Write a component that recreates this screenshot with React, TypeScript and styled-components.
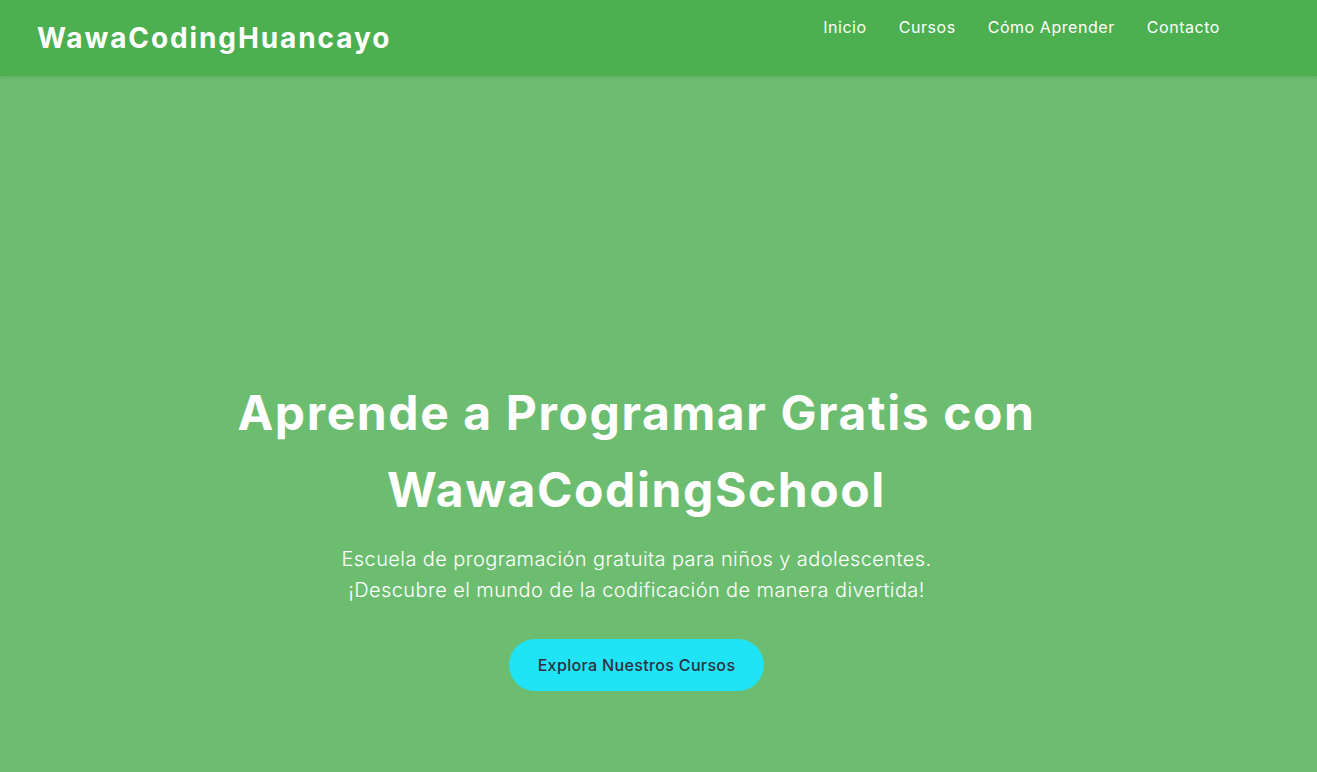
import React from 'react';
import styled, { createGlobalStyle } from 'styled-components';

const GlobalStyle = createGlobalStyle`
  * { box-sizing: border-box; }
  body {
    margin: 0;
    font-family: Inter, "Open Sans", sans-serif;
    background: #6dbd70;
    overflow: hidden;
  }
`;

const Header = styled.header`
  height: 76px;
  background: #4caf50;
  display: flex;
  justify-content: space-between;
  align-items: flex-start;
  padding: 0 37px;
  box-shadow: 0 2px 4px rgba(0, 0, 0, 0.08);
  position: relative;
  z-index: 1;
`;

const Logo = styled.h1`
  margin: 0;
  line-height: 76px;
  font-size: 28px;
  font-weight: 700;
  color: #ffffff;
  letter-spacing: 1.9px;
`;

const NavList = styled.ul`
  list-style: none;
  display: flex;
  gap: 32px;
  margin: 0;
  padding: 17px 60px 0 0;
`;

const NavLink = styled.a`
  color: #ffffff;
  text-decoration: none;
  font-size: 16px;
  line-height: 20px;
  font-weight: 400;
  letter-spacing: 0.55px;
`;

const Hero = styled.section`
  min-height: 696px;
  display: flex;
  flex-direction: column;
  align-items: center;
  padding: 298px 44px 0 0;
  text-align: center;
  color: #ffffff;
`;

const Title = styled.h2`
  margin: 0;
  max-width: 900px;
  font-size: 48px;
  line-height: 77px;
  font-weight: 700;
  letter-spacing: 1.6px;
`;

const Subtitle = styled.p`
  margin: 16px 0 0;
  font-size: 20px;
  line-height: 31px;
  font-weight: 300;
  letter-spacing: 0.4px;
`;

const CTA = styled.a`
  margin-top: 33px;
  display: inline-flex;
  align-items: center;
  justify-content: center;
  width: 255px;
  height: 52px;
  border-radius: 26px;
  background: #20e3f5;
  color: #2c3040;
  font-size: 16px;
  font-weight: 500;
  letter-spacing: 0.35px;
  text-decoration: none;
`;

const navItems = ['Inicio', 'Cursos', 'Cómo Aprender', 'Contacto'];

export default function App() {
  return (
    <>
      <GlobalStyle />
      <Header>
        <Logo>WawaCodingHuancayo</Logo>
        <nav>
          <NavList>
            {navItems.map((item) => (
              <li key={item}>
                <NavLink href="#">{item}</NavLink>
              </li>
            ))}
          </NavList>
        </nav>
      </Header>
      <Hero>
        <Title>
          Aprende a Programar Gratis con
          <br />
          WawaCodingSchool
        </Title>
        <Subtitle>
          Escuela de programación gratuita para niños y adolescentes.
          <br />
          ¡Descubre el mundo de la codificación de manera divertida!
        </Subtitle>
        <CTA href="#">Explora Nuestros Cursos</CTA>
      </Hero>
    </>
  );
}
